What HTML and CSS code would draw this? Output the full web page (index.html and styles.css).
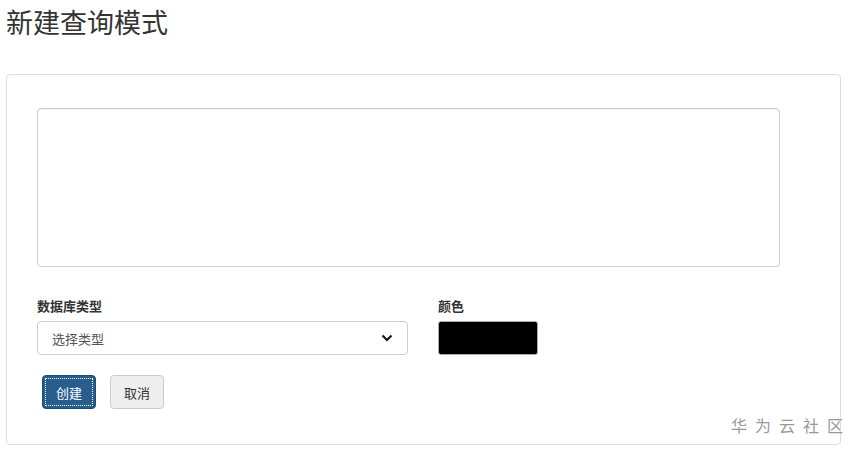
FILE: index.html
```html
<!DOCTYPE html>
<html lang="zh">
<head>
<meta charset="utf-8">
<link rel="stylesheet" href="styles.css">
</head>
<body>
<div class="page">
  <h1 class="title">新建查询模式</h1>
  <div class="card">
    <textarea class="query"></textarea>
    <div class="row">
      <div class="field field-db">
        <label class="label">数据库类型</label>
        <div class="select">
          <span class="select-text">选择类型</span>
          <svg class="chev" width="12" height="8" viewBox="0 0 12 8"><path d="M1.5 1.5 L6 6 L10.5 1.5" fill="none" stroke="#111" stroke-width="2"/></svg>
        </div>
      </div>
      <div class="field field-color">
        <label class="label">颜色</label>
        <div class="color"></div>
      </div>
    </div>
    <div class="actions">
      <button class="btn btn-primary">创建</button>
      <button class="btn btn-default">取消</button>
    </div>
  </div>
  <div class="watermark">华为云社区</div>
</div>
</body>
</html>
```
FILE: styles.css
```css
html, body { margin: 0; padding: 0; background: #fff; }
body { font-family: "Microsoft YaHei", "Noto Sans CJK SC", "Liberation Sans", sans-serif; color: #333; }
.page { position: relative; padding: 0 11px 0 6px; height: 452px; box-sizing: border-box; }
.title { margin: 0; padding-top: 4px; font-size: 27px; font-weight: 400; line-height: 36px; height: 70px; color: #333; box-sizing: border-box; }
.card { border: 1px solid #ddd; border-radius: 4px; height: 371px; box-sizing: border-box; padding: 33px 30px 0 30px; margin-top: 4px; }
.query { display: block; width: 743px; height: 159px; box-sizing: border-box; border: 1px solid #ccc; border-radius: 4px; resize: none; margin: 0; box-shadow: inset 0 1px 1px rgba(0,0,0,.05); }
.row { display: flex; gap: 30px; margin-top: 30px; }
.label { display: block; font-size: 13px; font-weight: 700; line-height: 18px; height: 24px; color: #333; }
.select { width: 371px; height: 34px; box-sizing: border-box; border: 1px solid #ccc; border-radius: 4px; display: flex; align-items: center; justify-content: space-between; padding: 0 14px; }
.select-text { font-size: 13px; color: #555; }
.chev { display: block; }
.color { width: 100px; height: 34px; box-sizing: border-box; background: #000; border: 1px solid #aaa; border-radius: 3px; }
.actions { display: flex; gap: 14px; margin-top: 20px; padding-left: 5px; }
.btn { font-family: inherit; font-size: 13px; height: 34px; padding: 0 10px; border-radius: 4px; cursor: pointer; }
.btn-primary { width: 54px; background: #285e8e; color: #fff; border: 1px solid #204d74; outline: 1px dotted #fff; outline-offset: -4px; }
.btn-default { width: 54px; background: #eee; color: #333; border: 1px solid #ccc; }
.watermark { position: absolute; left: 731px; top: 413px; font-size: 16px; letter-spacing: 8px; color: #999; white-space: nowrap; }
```
